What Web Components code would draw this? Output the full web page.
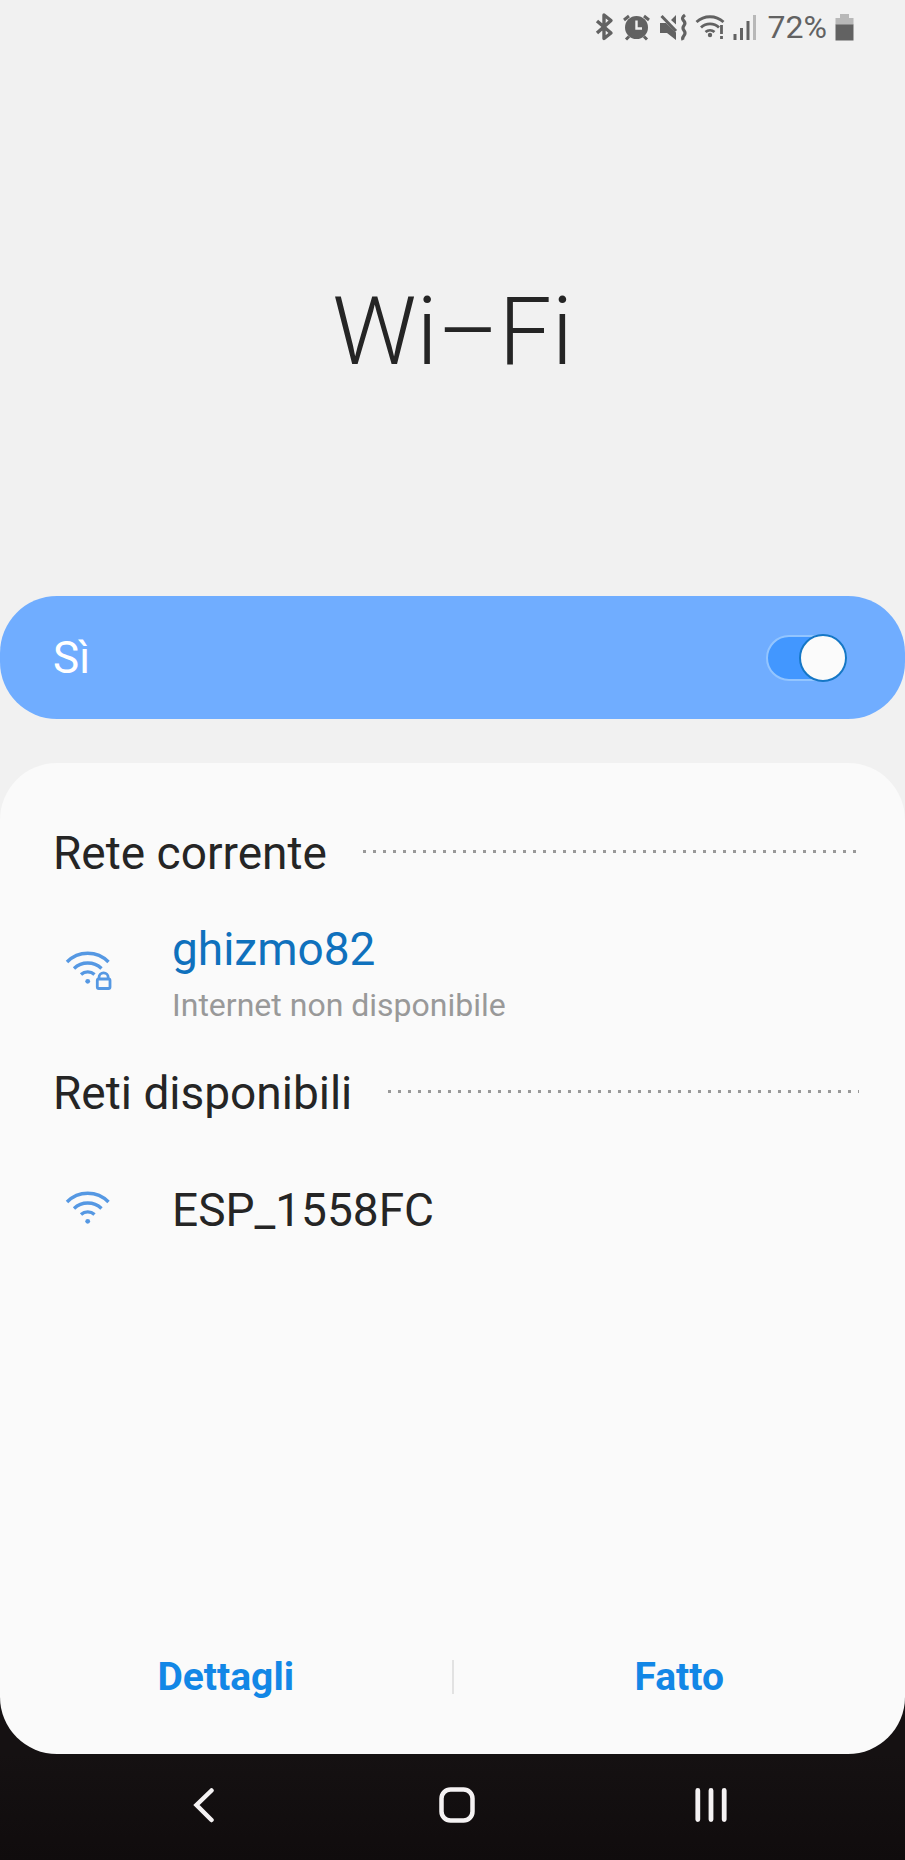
<!DOCTYPE html>
<html lang="it">
<head>
<meta charset="utf-8">
<meta name="viewport" content="width=device-width, initial-scale=1">
<title>Wi-Fi</title>
<style>
    body {
        margin: 0;
        background: #f1f1f1;
        color: #252525;
        font-family: Roboto, "Liberation Sans", sans-serif;
    }
</style>
</head>
<body>
<wifi-screen></wifi-screen>

<script>
const wifiWaves = `
    <path d="M3 13A29 29 0 0 1 44.5 13M10 19.5A20 20 0 0 1 37.5 19.5M17 25.5A10 10 0 0 1 30.5 25.5" fill="none" stroke="currentColor" stroke-width="3.4"/>
    <circle cx="23.7" cy="32.3" r="2.4" fill="currentColor"/>`;

// Icons are drawn at their natural size: [width, height, markup]
const icons = {
    bluetooth: [20, 28, '<path d="M2 8L16 20L9 25.5V2L16 7.5L2 20" fill="none" stroke="currentColor" stroke-width="3.4" stroke-linejoin="round"/>'],
    alarm: [28, 28, `
        <circle cx="13.5" cy="14.5" r="11.5" fill="currentColor"/>
        <path d="M13.5 7.5V15.5H19" fill="none" stroke="#f1f1f1" stroke-width="2.4"/>
        <path d="M1 7L6 3M21 3L26 7M3 26.5L6 23.5M24 26.5L21 23.5" stroke="currentColor" stroke-width="3"/>`],
    mute: [28, 28, `
        <path d="M1 10H7L17 19.5V27L8 20H1ZM17 2V11.5L12 7Z" fill="currentColor"/>
        <path d="M2.5 3L17 18" stroke="currentColor" stroke-width="3"/>
        <path d="M26 2Q22 5 24.5 7.5T25 12.5T25 17.5T25 22.5T24 27" fill="none" stroke="currentColor" stroke-width="3.2"/>`],
    wifiAlert: [30, 28, `
        <g fill="none" stroke="currentColor" stroke-width="2.8">
            <path d="M1.5 9A20 20 0 0 1 28.5 9M6 14.5A13 13 0 0 1 24 14.5M10.5 19A7 7 0 0 1 19.5 19"/>
            <path d="M26.5 12V21M26.5 23V26"/>
        </g>
        <circle cx="15" cy="22" r="2.2" fill="currentColor"/>`],
    signal: [24, 28, `
        <path d="M0.5 21H3.5V27H0.5ZM7 15H10V27H7ZM13.5 8H16.5V27H13.5Z" fill="currentColor"/>
        <path d="M20 2H23V27H20Z" fill="#b8b8b8"/>`],
    battery: [19, 28, `
        <path d="M5 1H14V5H18.5V12H0.5V5H5Z" fill="#b8b8b8"/>
        <path d="M0.5 11.5H18.5V27.5H0.5Z" fill="currentColor"/>`],
    wifi: [48, 42, wifiWaves],
    wifiLock: [48, 48, `
        ${wifiWaves}
        <rect x="32" y="27" width="16" height="14" fill="#fafafa"/>
        <rect x="33.3" y="30" width="12.7" height="9.5" rx="1.5" fill="none" stroke="currentColor" stroke-width="2.8"/>
        <path d="M35 30V28.5A4.6 4.6 0 0 1 44.2 28.5V30" fill="none" stroke="currentColor" stroke-width="2.8"/>`],
    back: [36, 36, '<path d="M26.5 3.5L11.5 18L26.5 33" fill="none" stroke="currentColor" stroke-width="4.5" stroke-linecap="round"/>'],
    home: [36, 36, '<rect x="2.5" y="2.5" width="31" height="31" rx="9" fill="none" stroke="currentColor" stroke-width="4.5"/>'],
    recents: [36, 36, '<path d="M4.8 3.5V32.5M18 3.5V32.5M31.2 3.5V32.5" stroke="currentColor" stroke-width="4.8" stroke-linecap="round"/>']
};

class XIcon extends HTMLElement {
    connectedCallback() {
        if (this.shadowRoot) return;
        const [w, h, body] = icons[this.getAttribute('name')];
        this.attachShadow({mode: 'open'}).innerHTML = `
            <style>
                :host { display: block; flex: none; }
                svg { display: block; }
            </style>
            <svg width="${w}" height="${h}" viewBox="0 0 ${w} ${h}" aria-hidden="true">${body}</svg>
        `;
    }
}

// Clones the given markup into an open shadow root
function define(name, html) {
    const template = document.createElement('template');
    template.innerHTML = html;
    customElements.define(name, class extends HTMLElement {
        constructor() {
            super();
            this.attachShadow({mode: 'open'}).appendChild(template.content.cloneNode(true));
        }
    });
}

customElements.define('x-icon', XIcon);

define('status-bar', `
    <style>
        :host {
            display: flex;
            align-items: center;
            justify-content: flex-end;
            gap: 8px;
            height: 54px;
            padding-right: 51px;
            color: #626262;
            font-size: 32px;
            line-height: 40px;
        }
        .level { margin-left: 3px; }
    </style>
    <x-icon name="bluetooth"></x-icon>
    <x-icon name="alarm"></x-icon>
    <x-icon name="mute"></x-icon>
    <x-icon name="wifiAlert"></x-icon>
    <x-icon name="signal"></x-icon>
    <span class="level">72%</span>
    <x-icon name="battery"></x-icon>
`);

define('page-title', `
    <style>
        :host {
            display: flex;
            align-items: center;
            justify-content: center;
            box-sizing: border-box;
            height: 542px;
            padding-top: 14px;
        }
        h1 {
            margin: 0;
            font-size: 94px;
            font-weight: 300;
            line-height: 112px;
        }
    </style>
    <h1><slot></slot></h1>
`);

define('switch-bar', `
    <style>
        :host {
            display: flex;
            align-items: center;
            justify-content: space-between;
            height: 123px;
            padding: 0 58px 0 53px;
            border-radius: 57px;
            background: #70adff;
            color: #fff;
        }
        label {
            font-size: 44px;
            line-height: 54px;
        }
        input {
            appearance: none;
            display: flex;
            align-items: center;
            box-sizing: border-box;
            width: 81px;
            height: 46px;
            margin: 0;
            border: 2px solid #93c5ff;
            border-radius: 23px;
            background: #8db9f5;
        }
        input:checked {
            justify-content: flex-end;
            background: #4297ff;
        }
        input::before {
            content: "";
            flex: none;
            box-sizing: border-box;
            width: 48px;
            height: 48px;
            margin: 0 -2px;
            border: 2px solid #1577c6;
            border-radius: 50%;
            background: #fbfbfb;
        }
    </style>
    <label for="toggle"><slot></slot></label>
    <input id="toggle" type="checkbox" role="switch" checked>
`);

define('section-header', `
    <style>
        :host {
            display: flex;
            align-items: center;
            gap: 36px;
        }
        h2 {
            margin: 0;
            font-size: 46px;
            font-weight: 400;
            line-height: 54px;
        }
        .dots {
            flex: 1;
            height: 3px;
            margin-bottom: 4px;
            background: repeating-linear-gradient(to right, #999 0 3px, transparent 3px 10px);
        }
    </style>
    <h2><slot></slot></h2>
    <div class="dots"></div>
`);

define('network-item', `
    <style>
        :host { display: block; }
        button {
            display: flex;
            align-items: center;
            gap: 60px;
            box-sizing: border-box;
            width: 100%;
            min-height: 180px;
            padding: 42px 11px;
            border: 0;
            background: none;
            color: inherit;
            font: inherit;
            text-align: left;
        }
        .icon { color: #5598e3; }
        .text {
            display: flex;
            flex-direction: column;
            gap: 10px;
        }
        .name {
            font-size: 46px;
            line-height: 54px;
        }
        :host([connected]) .name { color: #0f71bd; }
        ::slotted([slot=detail]) {
            color: #999;
            font-size: 32px;
            line-height: 38px;
        }
    </style>
    <button type="button">
        <span class="icon"><slot name="icon"></slot></span>
        <span class="text">
            <span class="name"><slot></slot></span>
            <slot name="detail"></slot>
        </span>
    </button>
`);

define('action-bar', `
    <style>
        :host {
            display: flex;
            align-items: center;
            margin-top: auto;
            padding-bottom: 27px;
        }
        button {
            flex: 1;
            height: 100px;
            border: 0;
            background: none;
            color: #1287e6;
            font: inherit;
            font-size: 39px;
            font-weight: 700;
        }
        .divider {
            width: 2px;
            height: 34px;
            background: #e2e2e2;
        }
    </style>
    <button type="button">Dettagli</button>
    <div class="divider"></div>
    <button type="button">Fatto</button>
`);

define('nav-bar', `
    <style>
        :host {
            display: flex;
            height: 106px;
            padding: 0 67px 0 76px;
            background: linear-gradient(#151112, #100c0d);
            color: #f5f2f3;
        }
        button {
            flex: 1;
            display: flex;
            align-items: center;
            justify-content: center;
            padding: 0 0 5px;
            border: 0;
            background: none;
            color: inherit;
        }
    </style>
    <button type="button" aria-label="Indietro"><x-icon name="back"></x-icon></button>
    <button type="button" aria-label="Home"><x-icon name="home"></x-icon></button>
    <button type="button" aria-label="Recenti"><x-icon name="recents"></x-icon></button>
`);

define('wifi-screen', `
    <style>
        :host {
            display: flex;
            flex-direction: column;
            min-height: 100vh;
        }
        .backdrop {
            flex: 1;
            display: flex;
            margin-top: 44px;
            /* dark area shows behind the lower corners of the sheet */
            background: linear-gradient(to top, #151112 100px, transparent 100px);
        }
        main {
            flex: 1;
            display: flex;
            flex-direction: column;
            border-radius: 57px;
            background: #fafafa;
        }
        .list { padding: 63px 46px 0 53px; }
    </style>
    <status-bar></status-bar>
    <page-title>Wi–Fi</page-title>
    <switch-bar>Sì</switch-bar>
    <div class="backdrop">
        <main>
            <div class="list">
                <section-header>Rete corrente</section-header>
                <network-item connected>
                    <x-icon slot="icon" name="wifiLock"></x-icon>
                    ghizmo82
                    <span slot="detail">Internet non disponibile</span>
                </network-item>
                <section-header>Reti disponibili</section-header>
                <network-item>
                    <x-icon slot="icon" name="wifi"></x-icon>
                    ESP_1558FC
                </network-item>
            </div>
            <action-bar></action-bar>
        </main>
    </div>
    <nav-bar></nav-bar>
`);
</script>
</body>
</html>
